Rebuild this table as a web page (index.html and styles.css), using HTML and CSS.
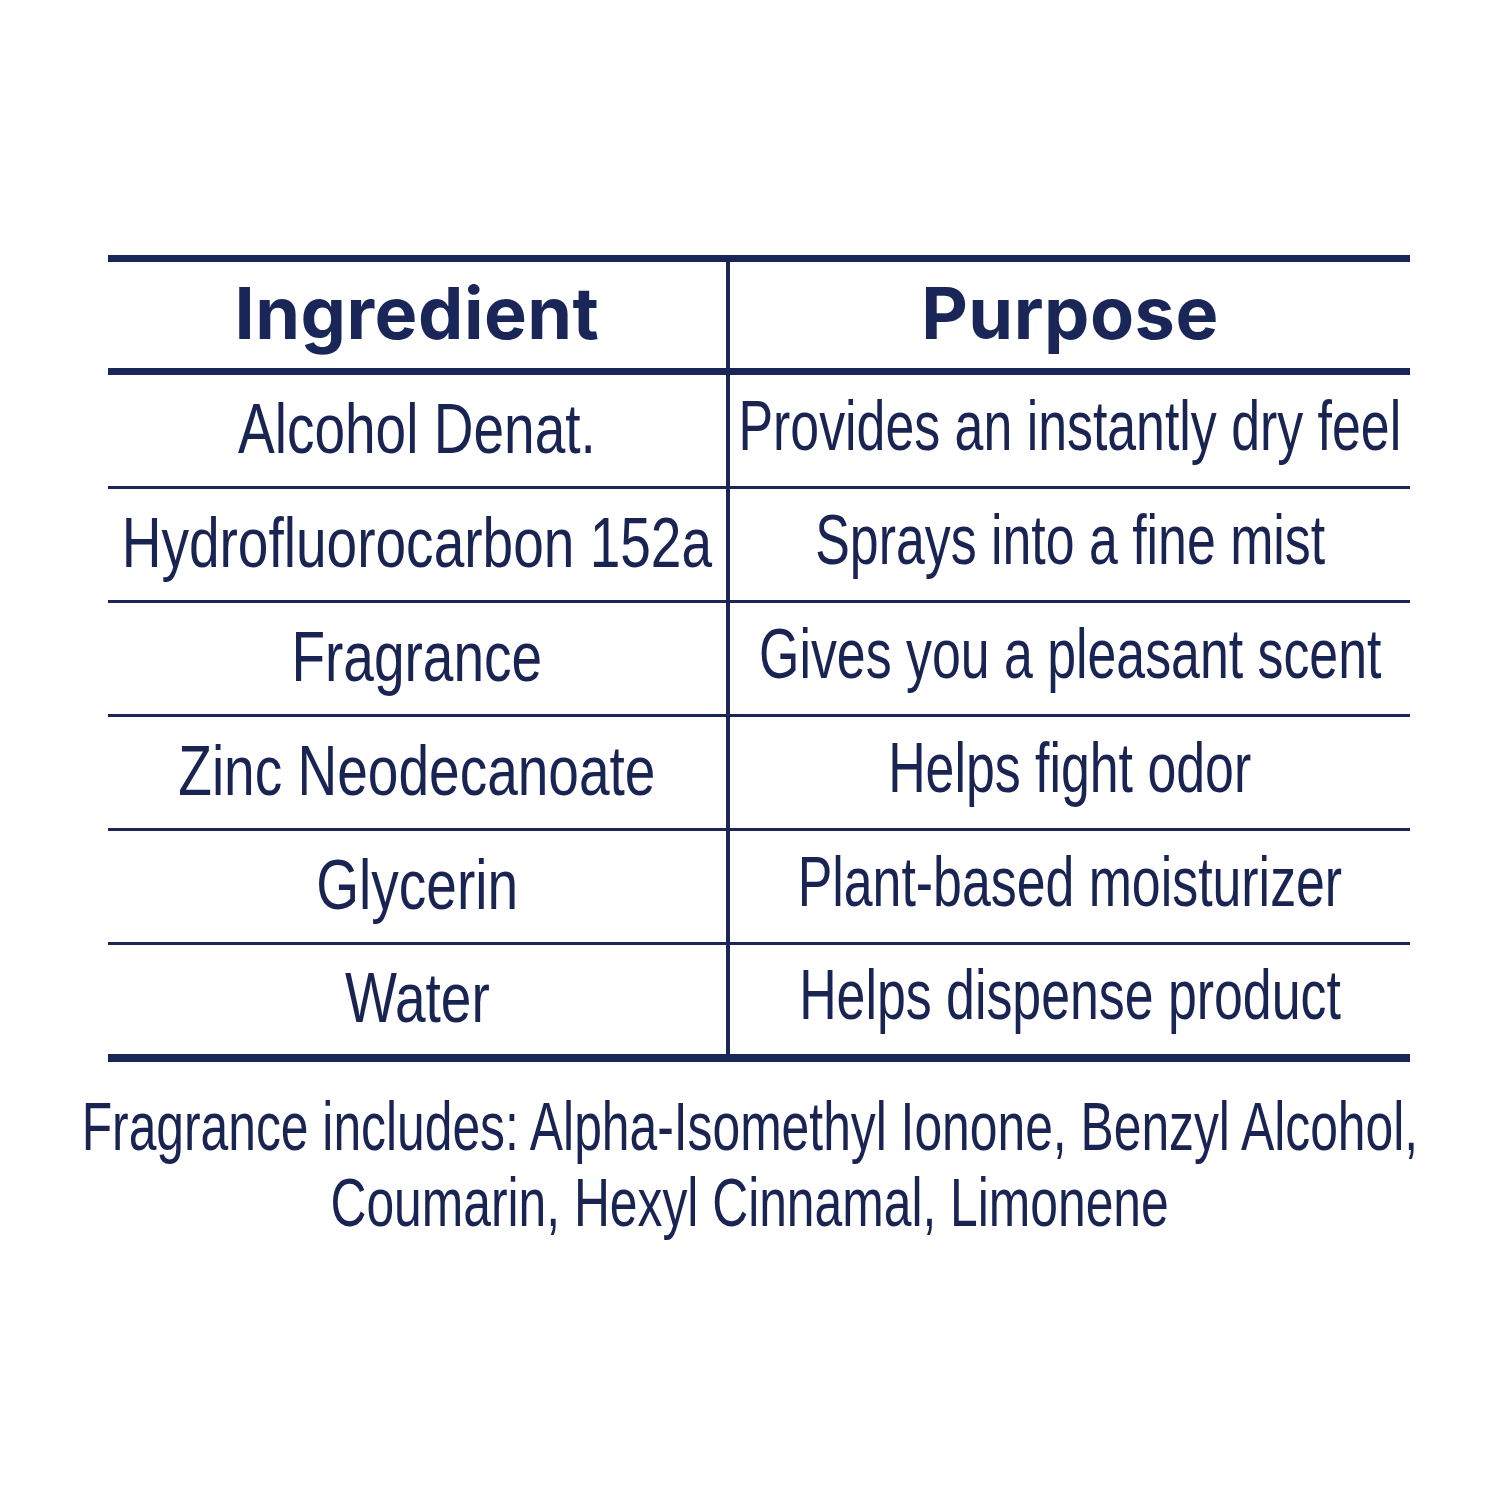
FILE: index.html
```html
<!DOCTYPE html>
<html lang="en">
<head>
<meta charset="utf-8">
<title>Ingredients</title>
<link rel="stylesheet" href="styles.css">
</head>
<body>
<main class="page">
  <section class="table">
    <div class="cell head left"><span class="h">Ingredient</span></div>
    <div class="cell head right"><span class="h">Purpose</span></div>

    <div class="cell left"><span class="t">Alcohol Denat.</span></div>
    <div class="cell right"><span class="t">Provides an instantly dry feel</span></div>

    <div class="cell left"><span class="t">Hydrofluorocarbon 152a</span></div>
    <div class="cell right"><span class="t">Sprays into a fine mist</span></div>

    <div class="cell left"><span class="t">Fragrance</span></div>
    <div class="cell right"><span class="t">Gives you a pleasant scent</span></div>

    <div class="cell left"><span class="t">Zinc Neodecanoate</span></div>
    <div class="cell right"><span class="t">Helps fight odor</span></div>

    <div class="cell left"><span class="t">Glycerin</span></div>
    <div class="cell right"><span class="t">Plant-based moisturizer</span></div>

    <div class="cell left last"><span class="t">Water</span></div>
    <div class="cell right last"><span class="t">Helps dispense product</span></div>
  </section>
  <p class="note">
    <span class="line"><span class="t">Fragrance includes: Alpha-Isomethyl Ionone, Benzyl Alcohol,</span></span>
    <span class="line"><span class="t">Coumarin, Hexyl Cinnamal, Limonene</span></span>
  </p>
</main>
</body>
</html>
```
FILE: styles.css
```css
html, body {
  margin: 0;
  padding: 0;
  background: #ffffff;
  overflow: hidden;
}

.page {
  width: 1500px;
  height: 1500px;
  padding-top: 255px;
  box-sizing: border-box;
  overflow: hidden;
  color: #1a2452;
  font-family: "Liberation Sans", Arial, sans-serif;
}

.table {
  margin-left: 108px;
  width: 1302px;
  display: grid;
  grid-template-columns: 622px 680px;
  border-top: 7px solid #1b2658;
  border-bottom: 8px solid #1b2658;
}

.cell {
  height: 111px;
  display: flex;
  align-items: center;
  justify-content: center;
  border-bottom: 3px solid #1b2658;
  white-space: nowrap;
}

.cell.left {
  border-right: 4px solid #1b2658;
}

.cell.head {
  height: 106px;
  border-bottom: 7px solid #1b2658;
}

.cell.last {
  border-bottom: none;
  height: 109px;
}

.h {
  font-family: Inter, "Liberation Sans", sans-serif;
  font-weight: 700;
  font-size: 72px;
  letter-spacing: 0.5px;
  line-height: 1;
  color: #1b2658;
  margin-top: -4px;
}

.t {
  display: inline-block;
  font-size: 71px;
  line-height: 1;
  transform: scaleX(0.775);
  transform-origin: center;
  margin-top: -4px;
}

.cell.right .t {
  transform: scaleX(0.73);
  margin-top: -11px;
}

.note {
  margin: 28px 0 0;
  display: flex;
  flex-direction: column;
  align-items: center;
}

.line {
  display: flex;
  justify-content: center;
  width: 1500px;
  height: 76px;
  align-items: center;
  white-space: nowrap;
}

.note .t {
  font-size: 68px;
  transform: scaleX(0.732);
}
```
